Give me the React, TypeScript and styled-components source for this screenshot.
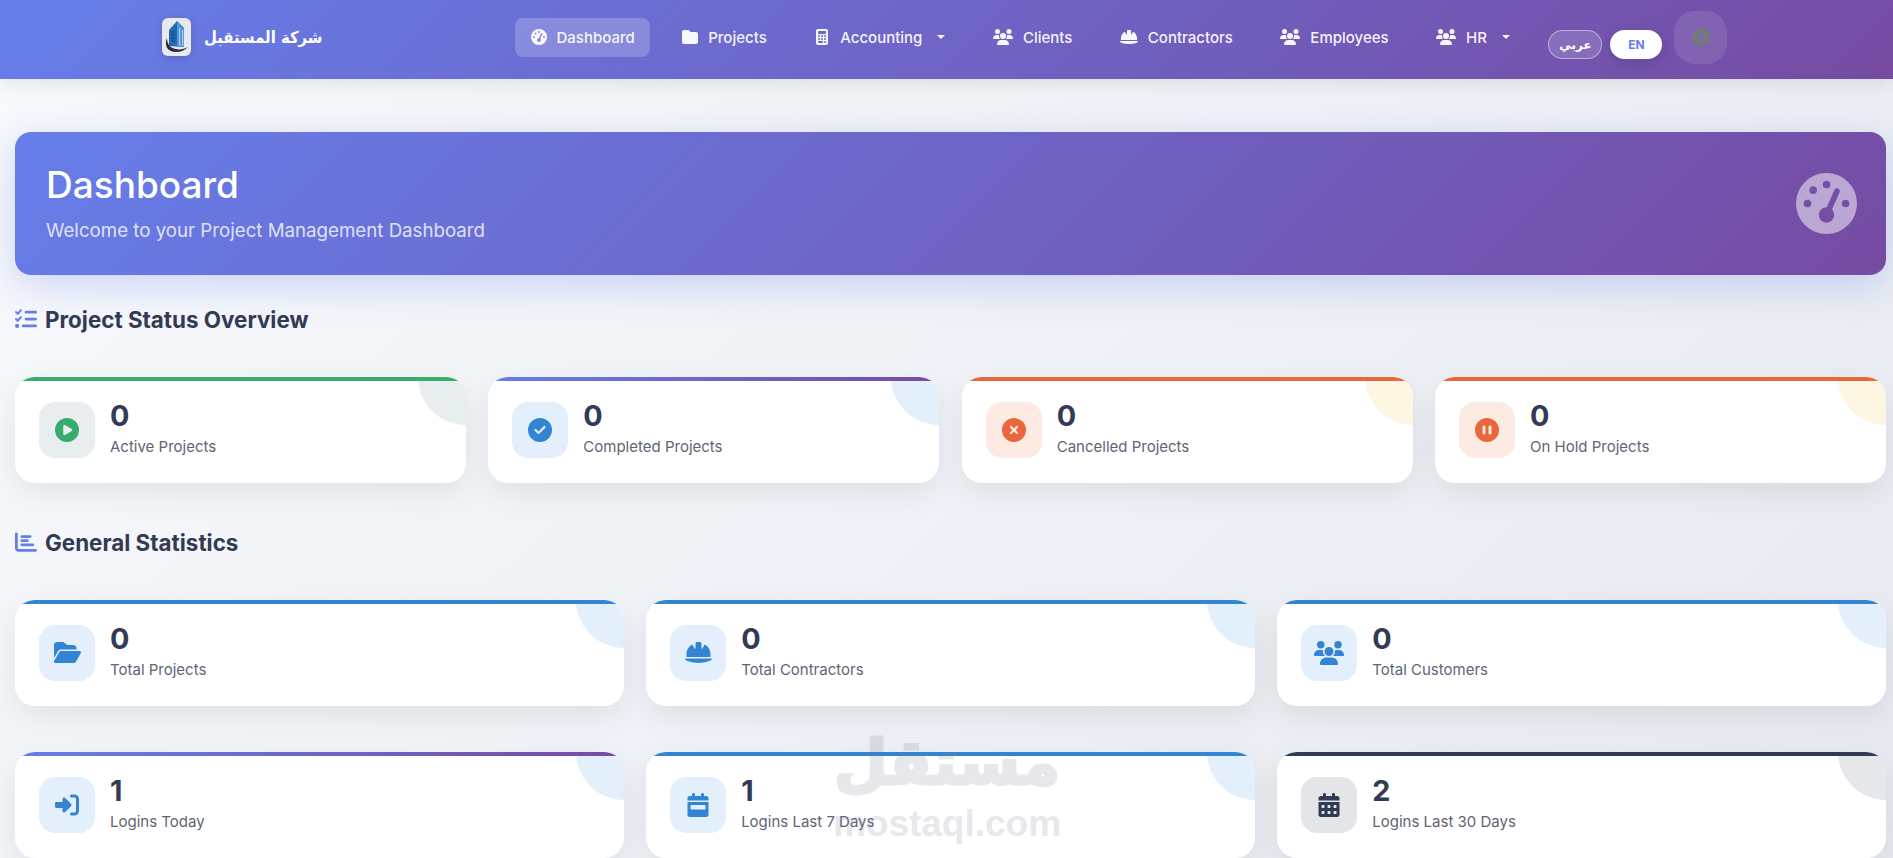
import * as React from 'react';
import styled, { createGlobalStyle } from 'styled-components';
import {
  FaGaugeHigh,
  FaFolder,
  FaCalculator,
  FaUsers,
  FaHelmetSafety,
  FaGear,
  FaListCheck,
  FaChartBar,
  FaCirclePlay,
  FaCircleCheck,
  FaCircleXmark,
  FaCirclePause,
  FaFolderOpen,
  FaRightToBracket,
  FaCalendarWeek,
  FaCalendarDays,
} from 'react-icons/fa6';

const purple = 'linear-gradient(135deg, #667eea 0%, #764ba2 100%)';
const barPurple = 'linear-gradient(90deg, #667eea 0%, #764ba2 100%)';
const ink = '#323a54';

const GlobalStyle = createGlobalStyle`
  html, body {
    margin: 0;
    height: 100%;
    overflow: hidden;
  }
  body {
    font-family: Inter, "Noto Sans", "DejaVu Sans", sans-serif;
    background: linear-gradient(135deg, #f8fafc 0%, #e6eaf0 100%);
    color: ${ink};
  }
  * {
    box-sizing: border-box;
  }
`;

const Page = styled.div`
  position: relative;
  height: 100vh;
  overflow: hidden;
`;

const NavBar = styled.nav`
  display: flex;
  align-items: center;
  height: 79px;
  padding: 0 0 5px 162px;
  background: ${purple};
  box-shadow: 0 4px 20px rgba(0, 0, 0, 0.1);
`;

const Brand = styled.div`
  display: flex;
  align-items: center;
  gap: 13px;
  width: 353px;
  color: #fff;
`;

const LogoTile = styled.div`
  display: flex;
  align-items: center;
  justify-content: center;
  width: 29px;
  height: 38px;
  border-radius: 6px;
  background: #e8e9ee;
  box-shadow: 0 2px 8px rgba(0, 0, 0, 0.15);
`;

const BrandName = styled.span`
  font-family: "DejaVu Sans Condensed", "DejaVu Sans", sans-serif;
  font-stretch: condensed;
  font-size: 16.5px;
  font-weight: 700;
`;

const NavLinks = styled.div`
  display: flex;
  align-items: center;
  gap: 16.5px;
`;

const NavLink = styled.a<{ $active?: boolean }>`
  display: flex;
  align-items: center;
  height: 39px;
  padding: 0 15.5px;
  gap: 10px;
  border-radius: 8px;
  color: rgba(255, 255, 255, 0.95);
  font-size: 15px;
  font-weight: 500;
  background: ${p => (p.$active ? 'rgba(255, 255, 255, 0.2)' : 'transparent')};
  svg {
    flex: none;
  }
`;

/* react-icons fits the glyph's width into 1em, so the wide ones get a bigger em */
const NavGlyph = styled.span<{ $size: number }>`
  display: flex;
  font-size: ${p => p.$size}px;
`;

const Caret = styled.span`
  width: 0;
  height: 0;
  margin-left: 5px;
  border-top: 4px solid rgba(255, 255, 255, 0.95);
  border-left: 4px solid transparent;
  border-right: 4px solid transparent;
`;

const LangGroup = styled.div`
  display: flex;
  align-items: center;
  gap: 8px;
  margin: 15px 12px 0 23px;
`;

const LangButton = styled.button<{ $active?: boolean }>`
  width: ${p => (p.$active ? '52px' : '54px')};
  height: 29px;
  padding: 0;
  border-radius: 15px;
  border: ${p => (p.$active ? 'none' : '1px solid rgba(255, 255, 255, 0.45)')};
  background: ${p => (p.$active ? '#fff' : 'rgba(255, 255, 255, 0.15)')};
  color: ${p => (p.$active ? '#667eea' : '#fff')};
  font-family: Inter, "DejaVu Sans", sans-serif;
  font-size: 12px;
  font-weight: 700;
  box-shadow: ${p => (p.$active ? '0 4px 15px rgba(0, 0, 0, 0.12)' : 'none')};
`;

const GearButton = styled.div`
  display: flex;
  align-items: center;
  justify-content: center;
  width: 53px;
  height: 53px;
  border-radius: 21px;
  background: rgba(255, 255, 255, 0.1);
  color: #74797a;
  font-size: 20px;
`;

const Main = styled.main`
  padding: 53px 7px 0 15px;
`;

const Hero = styled.header`
  display: flex;
  align-items: center;
  justify-content: space-between;
  height: 143px;
  padding: 0 29px 0 31px;
  border-radius: 16px;
  background: ${purple};
  color: #fff;
  box-shadow: 0 10px 40px rgba(102, 126, 234, 0.3);
`;

const HeroCopy = styled.div`
  padding-bottom: 3px;
`;

const HeroTitle = styled.h1`
  margin: 0 0 9px;
  font-size: 37px;
  line-height: 48px;
  font-weight: 500;
`;

const HeroText = styled.p`
  margin: 0;
  font-size: 18.7px;
  line-height: 26px;
  color: rgba(255, 255, 255, 0.8);
`;

const HeroIcon = styled.div`
  display: flex;
  font-size: 61px;
  color: rgba(255, 255, 255, 0.5);
`;

const SectionTitle = styled.h2`
  display: flex;
  align-items: center;
  gap: 8px;
  height: 30px;
  margin: 29px 0 43px;
  font-size: 22.4px;
  font-weight: 700;
  color: ${ink};
  svg {
    color: #667eea;
    font-size: 22px;
    flex: none;
  }
`;

const Grid = styled.section<{ $cols: number }>`
  display: grid;
  grid-template-columns: repeat(${p => p.$cols}, 1fr);
  column-gap: 22.4px;
  row-gap: 46px;
  margin-bottom: 44px;
`;

const Card = styled.article<{ $bar: string; $corner: string }>`
  position: relative;
  display: flex;
  align-items: center;
  gap: 15px;
  height: 106px;
  padding: 0 24px 1px;
  overflow: hidden;
  border-radius: 20px;
  background: #fff;
  box-shadow: 0 10px 30px rgba(0, 0, 0, 0.08);
  &::before {
    content: '';
    position: absolute;
    top: 0;
    left: 0;
    right: 0;
    height: 4px;
    background: ${p => p.$bar};
    z-index: 1;
  }
  &::after {
    content: '';
    position: absolute;
    top: -48px;
    right: -48px;
    width: 96px;
    height: 96px;
    border-radius: 50%;
    background: ${p => p.$corner};
  }
`;

const CardIcon = styled.div<{ $bg: string; $fg: string; $size?: number }>`
  display: flex;
  align-items: center;
  justify-content: center;
  width: 56px;
  height: 56px;
  flex: none;
  border-radius: 16px;
  background: ${p => p.$bg};
  color: ${p => p.$fg};
  font-size: ${p => p.$size ?? 24}px;
`;

const CardText = styled.div`
  margin-top: -3px;
`;

const CardValue = styled.div`
  font-size: 28.8px;
  line-height: 34px;
  font-weight: 700;
  color: ${ink};
`;

const CardLabel = styled.div`
  margin-top: 4px;
  font-size: 15px;
  line-height: 20px;
  color: #5f6475;
`;

const Watermark = styled.div`
  position: absolute;
  left: 835px;
  top: 722px;
  width: 224px;
  display: flex;
  flex-direction: column;
  align-items: center;
  color: #6e748c;
  opacity: 0.16;
  pointer-events: none;
  z-index: 5;
`;

const WatermarkArabic = styled.div`
  font-family: "DejaVu Sans", sans-serif;
  font-size: 62px;
  line-height: 82px;
  font-weight: 700;
  -webkit-text-stroke: 3px #6e748c;
`;

const WatermarkLatin = styled.div`
  font-family: "Liberation Sans", sans-serif;
  font-size: 37px;
  line-height: 40px;
  font-weight: 700;
`;

function BuildingLogo() {
  return (
    <svg width="26" height="36" viewBox="0 0 26 36">
      <path d="M5 27V11l8-9 7 7v19z" fill="#1f6cb4" />
      <path d="M13 2l7 7v19h-7z" fill="#4d93d6" />
      <path d="M15 9h1.2v18H15zM18 11h1.2v16H18z" fill="#a9cdf0" />
      <path d="M7 13h4M7 16h4M7 19h4M7 22h4" stroke="#123f78" strokeWidth="1" />
      <path d="M3 19c-3 7 0 14 9 14 5 0 9-2 12-5-4 2-8 3-12 2-6-1-9-5-9-11z" fill="#2b2f3a" />
    </svg>
  );
}

const blue = { bar: '#3385d4', corner: '#e3f0fc', bg: '#e3f0fc', fg: '#3385d4' };
const orange = { bar: '#e8673c', corner: '#fdf6e3', bg: '#fceae3', fg: '#e8673c' };

const statusCards = [
  { value: 0, label: 'Active Projects', icon: <FaCirclePlay />, bar: '#3aab6e', corner: '#e8edf0', bg: '#e8edf0', fg: '#3aab6e' },
  { value: 0, label: 'Completed Projects', icon: <FaCircleCheck />, ...blue, bar: barPurple },
  { value: 0, label: 'Cancelled Projects', icon: <FaCircleXmark />, ...orange },
  { value: 0, label: 'On Hold Projects', icon: <FaCirclePause />, ...orange },
];

const statCards = [
  { value: 0, label: 'Total Projects', icon: <FaFolderOpen />, size: 27, ...blue },
  { value: 0, label: 'Total Contractors', icon: <FaHelmetSafety />, size: 27, ...blue },
  { value: 0, label: 'Total Customers', icon: <FaUsers />, size: 30, ...blue },
  { value: 1, label: 'Logins Today', icon: <FaRightToBracket />, ...blue, bar: barPurple },
  { value: 1, label: 'Logins Last 7 Days', icon: <FaCalendarWeek />, ...blue },
  { value: 2, label: 'Logins Last 30 Days', icon: <FaCalendarDays />, bar: ink, corner: '#e6e7ea', bg: '#e3e5e9', fg: ink },
];

type CardData = {
  value: number;
  label: string;
  icon: React.ReactNode;
  bar: string;
  corner: string;
  bg: string;
  fg: string;
  size?: number;
};

function StatCard({ card }: { card: CardData }) {
  return (
    <Card $bar={card.bar} $corner={card.corner}>
      <CardIcon $bg={card.bg} $fg={card.fg} $size={card.size}>
        {card.icon}
      </CardIcon>
      <CardText>
        <CardValue>{card.value}</CardValue>
        <CardLabel>{card.label}</CardLabel>
      </CardText>
    </Card>
  );
}

export default function App() {
  return (
    <Page>
      <GlobalStyle />
      <NavBar>
        <Brand>
          <LogoTile>
            <BuildingLogo />
          </LogoTile>
          <BrandName>شركة المستقبل</BrandName>
        </Brand>
        <NavLinks>
          <NavLink $active>
            <NavGlyph $size={16}><FaGaugeHigh /></NavGlyph>
            Dashboard
          </NavLink>
          <NavLink>
            <NavGlyph $size={16}><FaFolder /></NavGlyph>
            Projects
          </NavLink>
          <NavLink>
            <NavGlyph $size={16}><FaCalculator /></NavGlyph>
            Accounting
            <Caret />
          </NavLink>
          <NavLink>
            <NavGlyph $size={20}><FaUsers /></NavGlyph>
            Clients
          </NavLink>
          <NavLink>
            <NavGlyph $size={18}><FaHelmetSafety /></NavGlyph>
            Contractors
          </NavLink>
          <NavLink>
            <NavGlyph $size={20}><FaUsers /></NavGlyph>
            Employees
          </NavLink>
          <NavLink>
            <NavGlyph $size={20}><FaUsers /></NavGlyph>
            HR
            <Caret />
          </NavLink>
        </NavLinks>
        <LangGroup>
          <LangButton>عربي</LangButton>
          <LangButton $active>EN</LangButton>
        </LangGroup>
        <GearButton>
          <FaGear />
        </GearButton>
      </NavBar>

      <Main>
        <Hero>
          <HeroCopy>
            <HeroTitle>Dashboard</HeroTitle>
            <HeroText>Welcome to your Project Management Dashboard</HeroText>
          </HeroCopy>
          <HeroIcon>
            <FaGaugeHigh />
          </HeroIcon>
        </Hero>

        <SectionTitle>
          <FaListCheck />
          Project Status Overview
        </SectionTitle>
        <Grid $cols={4}>
          {statusCards.map(card => (
            <StatCard key={card.label} card={card} />
          ))}
        </Grid>

        <SectionTitle>
          <FaChartBar />
          General Statistics
        </SectionTitle>
        <Grid $cols={3}>
          {statCards.map(card => (
            <StatCard key={card.label} card={card} />
          ))}
        </Grid>
      </Main>

      <Watermark>
        <WatermarkArabic>مستقل</WatermarkArabic>
        <WatermarkLatin>mostaql.com</WatermarkLatin>
      </Watermark>
    </Page>
  );
}
